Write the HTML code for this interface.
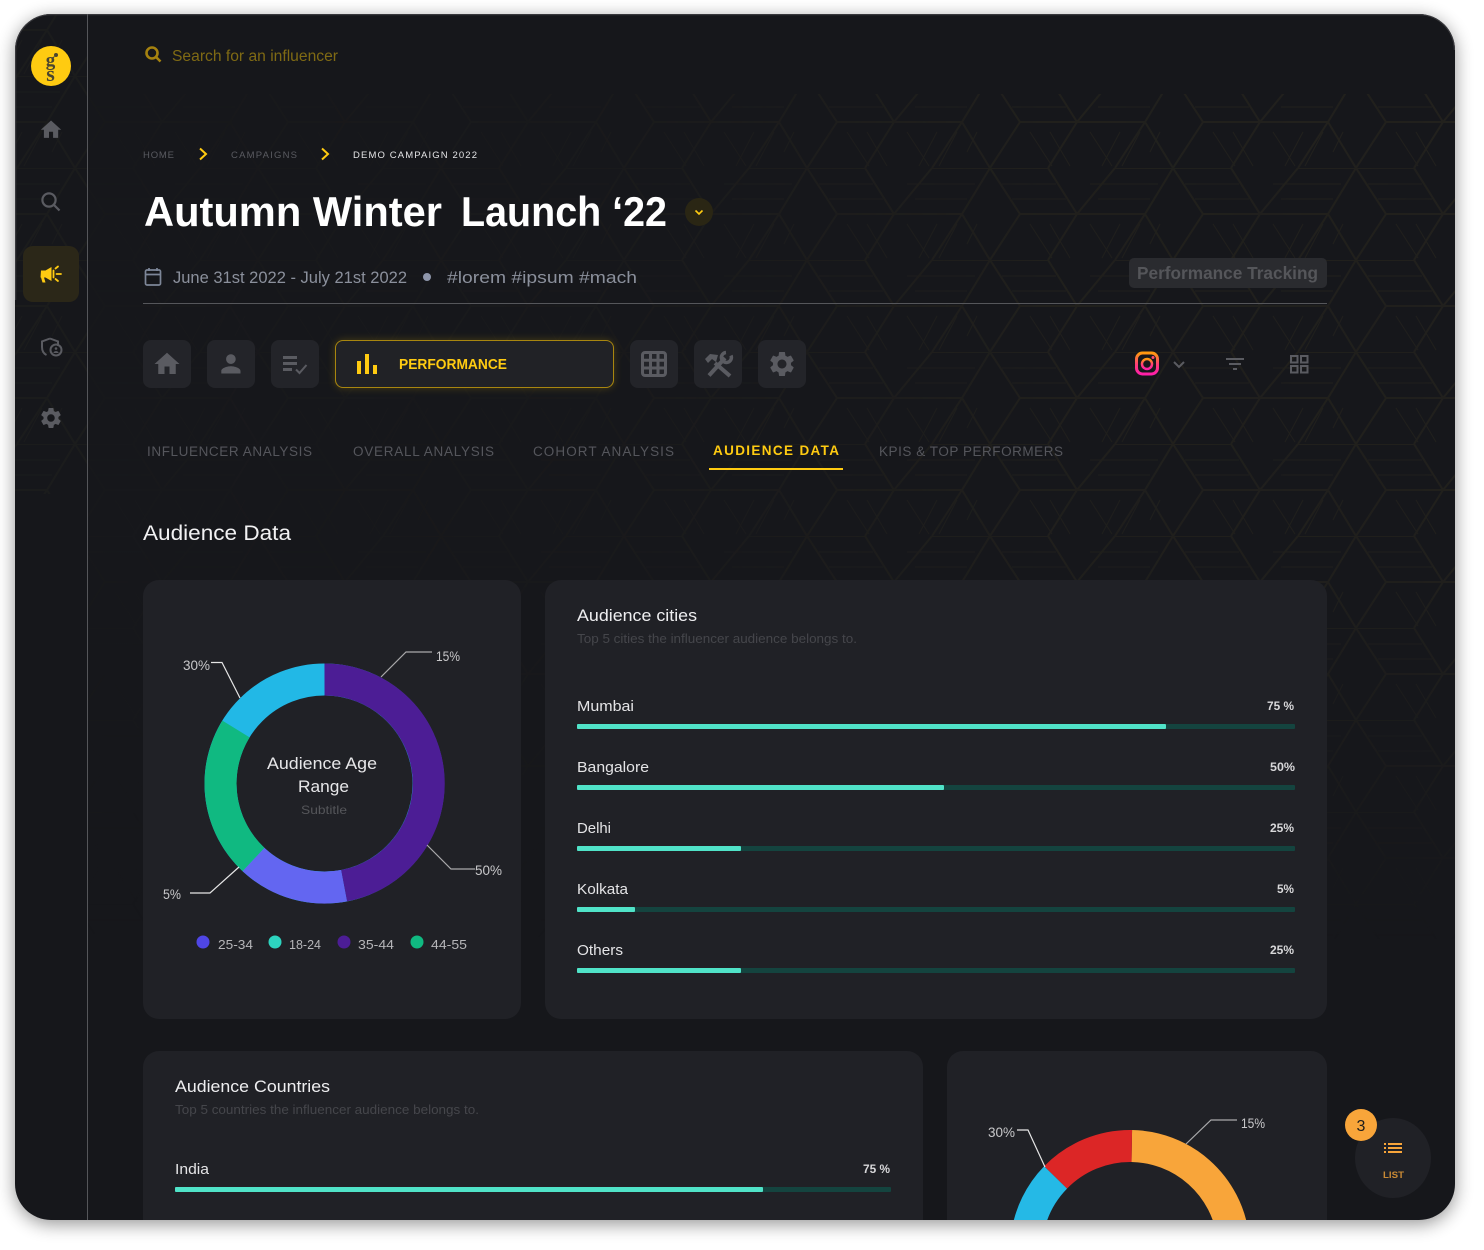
<!DOCTYPE html>
<html><head><meta charset="utf-8"><style>
html,body{margin:0;padding:0;background:#fff;width:1484px;height:1250px;overflow:hidden}
svg{display:block}
text{font-family:"Liberation Sans",sans-serif}
</style></head><body>
<svg width="1484" height="1250" viewBox="0 0 1484 1250" xmlns="http://www.w3.org/2000/svg" style="overflow:hidden">
<defs>
<filter id="sh" x="-5%" y="-5%" width="110%" height="110%"><feGaussianBlur stdDeviation="9"/></filter>
<filter id="glow" x="-10%" y="-40%" width="120%" height="180%"><feGaussianBlur stdDeviation="4"/></filter>
<clipPath id="fr"><rect x="15" y="14" width="1440" height="1206" rx="36"/></clipPath>
<pattern id="hex" patternUnits="userSpaceOnUse" width="183" height="92" x="75" y="76">
<g fill="none" stroke="#22211d">
<path stroke-width="2" d="M0 0H58L87 46H30L0 0M87 46H155L183 0H125L87 46M155 46L183 92M125 92L155 46M30 46L0 92M87 46L58 92"/>
<path stroke-width="1" d="M12 16H66M22 31H76M100 16H168M108 31H160M40 56L62 90M60 56L80 90M100 56L122 90M130 56L112 90M150 56L132 90M170 56L160 76"/>
</g>
</pattern>
<linearGradient id="fadeh" x1="0" y1="0" x2="1" y2="0"><stop offset="0" stop-color="#fff" stop-opacity=".12"/><stop offset=".4" stop-color="#fff" stop-opacity=".3"/><stop offset=".7" stop-color="#fff" stop-opacity=".9"/><stop offset="1" stop-color="#fff" stop-opacity="1"/></linearGradient>
<linearGradient id="fadev" gradientUnits="userSpaceOnUse" x1="0" y1="94" x2="0" y2="940"><stop offset="0" stop-color="#fff" stop-opacity="1"/><stop offset=".55" stop-color="#fff" stop-opacity=".9"/><stop offset="1" stop-color="#fff" stop-opacity="0"/></linearGradient>
<mask id="pm" maskUnits="userSpaceOnUse" x="0" y="0" width="1484" height="1250"><rect x="0" y="0" width="1484" height="1250" fill="url(#fadeh)"/></mask>
<mask id="pv" maskUnits="userSpaceOnUse" x="0" y="0" width="1484" height="1250"><rect x="0" y="0" width="1484" height="1250" fill="url(#fadev)"/></mask>
<linearGradient id="ig" x1="0" y1="0" x2="0" y2="1"><stop offset="0" stop-color="#ff9a0e"/><stop offset=".55" stop-color="#ff3d78"/><stop offset="1" stop-color="#ff1fa8"/></linearGradient>
<path id="home" d="M10 20v-6h4v6h5v-8h3L12 3 2 12h3v8z"/>
<path id="gear" d="M19.14 12.94c.04-.3.06-.61.06-.94 0-.32-.02-.64-.07-.94l2.03-1.58c.18-.14.23-.41.12-.61l-1.92-3.32c-.12-.22-.37-.29-.59-.22l-2.39.96c-.5-.38-1.03-.7-1.62-.94l-.36-2.54c-.04-.24-.24-.41-.48-.41h-3.84c-.24 0-.43.17-.47.41l-.36 2.54c-.59.24-1.13.57-1.62.94l-2.39-.96c-.22-.08-.47 0-.59.22L2.74 8.87c-.12.21-.08.47.12.61l2.03 1.58c-.05.3-.09.63-.09.94s.02.64.07.94l-2.03 1.58c-.18.14-.23.41-.12.61l1.92 3.32c.12.22.37.29.59.22l2.39-.96c.5.38 1.03.7 1.62.94l.36 2.54c.05.24.24.41.48.41h3.84c.24 0 .44-.17.47-.41l.36-2.54c.59-.24 1.13-.56 1.62-.94l2.39.96c.22.08.47 0 .59-.22l1.92-3.32c.12-.22.07-.47-.12-.61l-2.01-1.58zM12 15.6c-1.98 0-3.6-1.62-3.6-3.6s1.62-3.6 3.6-3.6 3.6 1.62 3.6 3.6-1.62 3.6-3.6 3.6z"/>
</defs>

<rect x="15" y="18" width="1440" height="1206" rx="36" fill="#000" opacity=".42" filter="url(#sh)"/>
<rect x="15" y="14" width="1440" height="1206" rx="36" fill="#16171b"/>

<g clip-path="url(#fr)">
<g mask="url(#pv)"><g mask="url(#pm)">
<rect x="88" y="94" width="1367" height="846" fill="url(#hex)"/>
</g></g>
<rect x="15" y="14" width="72" height="480" fill="url(#hex)" opacity=".45"/>
<path d="M15.500 300V50A35.500 35.500 0 0 1 51 14.500H1419A35.500 35.500 0 0 1 1454.500 50" fill="none" stroke="#38383c" stroke-width="1.500"/>
<rect x="87" y="14" width="1" height="1206" fill="#55565a"/>

<!-- sidebar -->
<circle cx="51" cy="66" r="20" fill="#ffcb11"/>
<g fill="#4a4530" font-weight="700" text-anchor="middle" style="font-family:'Liberation Serif',serif">
<text x="50.500" y="66" font-size="19" style="font-family:'Liberation Serif',serif">g</text>
<text x="50.500" y="81" font-size="22" style="font-family:'Liberation Serif',serif">s</text>
</g>
<circle cx="56" cy="55" r="2" fill="#4a4530"/>
<use href="#home" transform="translate(38.800 117.500) scale(1.020)" fill="#5a5b61"/>
<g fill="none" stroke="#5a5b61" stroke-width="2.200"><circle cx="49" cy="200" r="6.600"/><path d="M54 205L59.500 210.500"/></g>
<rect x="23" y="246" width="56" height="56" rx="10" fill="#2b2718"/>
<g fill="#ffcb11"><path d="M41 270.500h4.500l6-3.500v14l-6-3.500h-1.500l1.500 5h-3l-1.500-5h-.500z"/></g>
<g stroke="#ffcb11" stroke-width="1.800" fill="none" stroke-linecap="round"><path d="M53.500 270.500L53.500 277.500"/><path d="M55.500 268.500L58 266.500M56.500 274H61M55.500 279L58 281"/></g>
<g fill="none" stroke="#5a5b61" stroke-width="2"><path d="M50 338.500l8 3v4.500M46.500 355c-3-1.500-4.500-4.500-4.500-8v-5.500l8-3"/><circle cx="56" cy="350" r="5.500"/></g>
<circle cx="56" cy="348.500" r="1.300" fill="#5a5b61"/><path d="M53.500 353c0-2.500 5-2.500 5 0z" fill="#5a5b61"/>
<use href="#gear" transform="translate(38.500 405.500) scale(1.040)" fill="#5a5b61"/>

<!-- search -->
<g fill="none" stroke="#a5820f" stroke-width="2.600"><circle cx="152" cy="53" r="5.500"/><path d="M156 57L160.500 61.500"/></g>
<text x="172" y="61" font-size="15.500" fill="#7f6a14" textLength="166" lengthAdjust="spacingAndGlyphs">Search for an influencer</text>

<!-- breadcrumb -->
<text x="143" y="158" font-size="9.500" fill="#5a5b61" textLength="31" lengthAdjust="spacing">HOME</text>
<path d="M200 148.500L206 154L200 159.500" fill="none" stroke="#ffcb11" stroke-width="2"/>
<text x="231" y="158" font-size="9.500" fill="#5a5b61" textLength="66" lengthAdjust="spacing">CAMPAIGNS</text>
<path d="M322 148.500L328 154L322 159.500" fill="none" stroke="#ffcb11" stroke-width="2"/>
<text x="353" y="158" font-size="9.500" fill="#e4e4e6" textLength="124" lengthAdjust="spacing">DEMO CAMPAIGN 2022</text>

<!-- title -->
<text x="144" y="226" font-size="42" font-weight="700" fill="#fff" textLength="298" lengthAdjust="spacingAndGlyphs">Autumn Winter</text>
<text x="461" y="226" font-size="42" font-weight="700" fill="#fff" textLength="206" lengthAdjust="spacingAndGlyphs">Launch ‘22</text>
<circle cx="699" cy="212" r="14" fill="#2a2614"/>
<path d="M695.500 210.500L699 214L702.500 210.500" fill="none" stroke="#ffcb11" stroke-width="1.600"/>

<!-- date row -->
<g fill="none" stroke="#7d8698" stroke-width="1.700"><rect x="145.500" y="270" width="15" height="15" rx="1.500"/><path d="M145.500 274.500H160.500M149 268V271M157 268V271"/></g>
<text x="173" y="283" font-size="17" fill="#8b909c" textLength="234" lengthAdjust="spacingAndGlyphs">June 31st 2022 - July 21st 2022</text>
<circle cx="427" cy="277" r="4" fill="#8e96ab"/>
<text x="447" y="283" font-size="17" fill="#8b909c" textLength="190" lengthAdjust="spacingAndGlyphs">#lorem #ipsum #mach</text>
<rect x="1129" y="258" width="198" height="30" rx="5" fill="#2a2b2f"/>
<text x="1137" y="279" font-size="17.500" font-weight="700" fill="#55565a" textLength="181" lengthAdjust="spacingAndGlyphs">Performance Tracking</text>
<rect x="143" y="303" width="1184" height="1" fill="#55565a"/>

<!-- toolbar -->
<g fill="#232429">
<rect x="143" y="340" width="48" height="48" rx="8"/><rect x="207" y="340" width="48" height="48" rx="8"/><rect x="271" y="340" width="48" height="48" rx="8"/>
<rect x="630" y="340" width="48" height="48" rx="8"/><rect x="694" y="340" width="48" height="48" rx="8"/><rect x="758" y="340" width="48" height="48" rx="8"/>
</g>
<rect x="335" y="340" width="279" height="48" rx="8" fill="#ffcb11" opacity=".22" filter="url(#glow)"/>
<rect x="335.500" y="340.500" width="278" height="47" rx="7.500" fill="#212226" stroke="#a8860f"/>
<use href="#home" transform="translate(152 349) scale(1.250)" fill="#5a5b61"/>
<path transform="translate(216.500 349.500) scale(1.200)" fill="#5a5b61" d="M12 12c2.210 0 4-1.790 4-4s-1.790-4-4-4-4 1.790-4 4 1.790 4 4 4zm0 2c-2.670 0-8 1.340-8 4v2h16v-2c0-2.660-5.330-4-8-4z"/>
<g fill="#5a5b61"><rect x="283" y="356" width="14" height="3"/><rect x="283" y="362" width="14" height="3"/><rect x="283" y="368" width="9" height="3"/></g>
<path d="M296 369.500L299.500 373L306.500 365" fill="none" stroke="#5a5b61" stroke-width="2"/>
<g fill="#ffcb11"><rect x="357" y="361" width="4" height="13"/><rect x="365" y="354" width="4" height="20"/><rect x="373" y="365" width="4" height="9"/></g>
<text x="399" y="369" font-size="14.500" font-weight="700" fill="#ffcb11" textLength="108" lengthAdjust="spacingAndGlyphs">PERFORMANCE</text>
<g fill="none" stroke="#5a5b61" stroke-width="3"><rect x="642.500" y="352.500" width="23" height="23" rx="2.500"/><path d="M650.500 352V376M658 352V376M642 360.300H666M642 368H666"/></g>
<g stroke="#5a5b61" fill="none" stroke-width="4">
<path d="M709 375.500L725 358"/>
<path d="M715 363L730 376"/>
</g>
<path d="M705 359L710 354L718 355L716 362L712 359L708 363Z" fill="#5a5b61"/>
<path d="M731 355.500a5 5 0 1 1-5-3" fill="none" stroke="#5a5b61" stroke-width="3.500"/>

<use href="#gear" transform="translate(767 349) scale(1.250)" fill="#5a5b61"/>

<!-- right tools -->
<rect x="1136.500" y="353" width="21" height="21" rx="6" fill="none" stroke="url(#ig)" stroke-width="3"/>
<circle cx="1147" cy="364" r="5" fill="none" stroke="url(#ig)" stroke-width="2.500"/>
<circle cx="1153" cy="357.500" r="1.500" fill="#ff4a70"/>
<path d="M1174 362L1179 367L1184 362" fill="none" stroke="#5a5b61" stroke-width="2"/>
<g fill="#5a5b61"><rect x="1226" y="358" width="18" height="2"/><rect x="1229" y="363" width="12" height="2"/><rect x="1233" y="368" width="4" height="2"/></g>
<g fill="none" stroke="#5a5b61" stroke-width="2"><rect x="1291" y="356" width="6.500" height="6.500"/><rect x="1301" y="356" width="6.500" height="6.500"/><rect x="1291" y="366" width="6.500" height="6.500"/><rect x="1301" y="366" width="6.500" height="6.500"/></g>

<!-- tabs -->
<g font-size="13.500" fill="#55565c">
<text x="147" y="456" textLength="165" lengthAdjust="spacing">INFLUENCER ANALYSIS</text>
<text x="353" y="456" textLength="141" lengthAdjust="spacing">OVERALL ANALYSIS</text>
<text x="533" y="456" textLength="141" lengthAdjust="spacing">COHORT ANALYSIS</text>
<text x="879" y="456" textLength="184" lengthAdjust="spacing">KPIS &amp; TOP PERFORMERS</text>
</g>
<text x="713" y="455" font-size="13.500" font-weight="700" fill="#ffcb11" textLength="126" lengthAdjust="spacing">AUDIENCE DATA</text>
<rect x="709" y="468" width="134" height="2" fill="#ffcb11"/>

<text x="143" y="540" font-size="21.500" fill="#f2f2f3" textLength="148" lengthAdjust="spacingAndGlyphs">Audience Data</text>

<!-- cards -->
<g fill="#202126">
<rect x="143" y="580" width="378" height="439" rx="16"/>
<rect x="545" y="580" width="782" height="439" rx="16"/>
<rect x="143" y="1051" width="780" height="190" rx="16"/>
<rect x="947" y="1051" width="380" height="190" rx="16"/>
</g>

<!-- donut 1 -->
<g fill="none" stroke-width="32">
<circle cx="324.500" cy="783.500" r="104" stroke="#22b8e6"/>
<path stroke="#4c1d95" d="M324.500 679.500A104 104 0 0 1 344 885.700"/>
<path stroke="#6366f1" d="M344 885.700A104 104 0 0 1 253.500 859.500"/>
<path stroke="#10b981" d="M253.500 859.500A104 104 0 0 1 236 729"/>
</g>
<g fill="none" stroke="#a9a9ab" stroke-width="1.200">
<path d="M381 677L406 652H432"/><path d="M427 845L451 869H475"/>
</g>
<g fill="none" stroke="#e6e6e6" stroke-width="1.200">
<path d="M211 662.500H222L240 698"/><path d="M190 893H210L239 867"/>
</g>
<g font-size="14" fill="#c8c8ca">
<text x="183" y="670" textLength="27" lengthAdjust="spacingAndGlyphs">30%</text>
<text x="436" y="661" textLength="24" lengthAdjust="spacingAndGlyphs">15%</text>
<text x="475" y="875" textLength="27" lengthAdjust="spacingAndGlyphs">50%</text>
<text x="163" y="899" textLength="18" lengthAdjust="spacingAndGlyphs">5%</text>
</g>
<text x="267" y="769" font-size="16.500" fill="#e6e6e8" textLength="110" lengthAdjust="spacingAndGlyphs">Audience Age</text>
<text x="298" y="792" font-size="16.500" fill="#e6e6e8" textLength="51" lengthAdjust="spacingAndGlyphs">Range</text>
<text x="301" y="814" font-size="12" fill="#55565a" textLength="46" lengthAdjust="spacingAndGlyphs">Subtitle</text>
<circle cx="203" cy="942" r="6.500" fill="#4f46e5"/><circle cx="275" cy="942" r="6.500" fill="#2dd4bf"/><circle cx="344" cy="942" r="6.500" fill="#4c1d95"/><circle cx="417" cy="942" r="6.500" fill="#10b981"/>
<g font-size="12.500" fill="#b5b5b8">
<text x="218" y="949" textLength="35" lengthAdjust="spacingAndGlyphs">25-34</text>
<text x="289" y="949" textLength="32" lengthAdjust="spacingAndGlyphs">18-24</text>
<text x="358" y="949" textLength="36" lengthAdjust="spacingAndGlyphs">35-44</text>
<text x="431" y="949" textLength="36" lengthAdjust="spacingAndGlyphs">44-55</text>
</g>

<!-- cities -->
<text x="577" y="621" font-size="17" fill="#eeeef0" textLength="120" lengthAdjust="spacingAndGlyphs">Audience cities</text>
<text x="577" y="643" font-size="12.500" fill="#45464b" textLength="280" lengthAdjust="spacingAndGlyphs">Top 5 cities the influencer audience belongs to.</text>
<g font-size="15" fill="#e4e4e6">
<text x="577" y="711" textLength="57" lengthAdjust="spacingAndGlyphs">Mumbai</text>
<text x="577" y="772" textLength="72" lengthAdjust="spacingAndGlyphs">Bangalore</text>
<text x="577" y="833" textLength="34" lengthAdjust="spacingAndGlyphs">Delhi</text>
<text x="577" y="894" textLength="51" lengthAdjust="spacingAndGlyphs">Kolkata</text>
<text x="577" y="955" textLength="46" lengthAdjust="spacingAndGlyphs">Others</text>
</g>
<g font-size="12" font-weight="700" fill="#d8d8da">
<text x="1267" y="710" textLength="27" lengthAdjust="spacingAndGlyphs">75 %</text>
<text x="1270" y="771" textLength="25" lengthAdjust="spacingAndGlyphs">50%</text>
<text x="1270" y="832" textLength="24" lengthAdjust="spacingAndGlyphs">25%</text>
<text x="1277" y="893" textLength="17" lengthAdjust="spacingAndGlyphs">5%</text>
<text x="1270" y="954" textLength="24" lengthAdjust="spacingAndGlyphs">25%</text>
</g>
<g fill="#14443f">
<rect x="577" y="724" width="718" height="5" rx="1"/><rect x="577" y="785" width="718" height="5" rx="1"/><rect x="577" y="846" width="718" height="5" rx="1"/><rect x="577" y="907" width="718" height="5" rx="1"/><rect x="577" y="968" width="718" height="5" rx="1"/>
</g>
<g fill="#50e3c8">
<rect x="577" y="724" width="589" height="5" rx="1"/><rect x="577" y="785" width="367" height="5" rx="1"/><rect x="577" y="846" width="164" height="5" rx="1"/><rect x="577" y="907" width="58" height="5" rx="1"/><rect x="577" y="968" width="164" height="5" rx="1"/>
</g>

<!-- countries -->
<text x="175" y="1092" font-size="17" fill="#eeeef0" textLength="155" lengthAdjust="spacingAndGlyphs">Audience Countries</text>
<text x="175" y="1114" font-size="12.500" fill="#45464b" textLength="304" lengthAdjust="spacingAndGlyphs">Top 5 countries the influencer audience belongs to.</text>
<text x="175" y="1174" font-size="15" fill="#e4e4e6" textLength="34" lengthAdjust="spacingAndGlyphs">India</text>
<text x="863" y="1173" font-size="12" font-weight="700" fill="#d8d8da" textLength="27" lengthAdjust="spacingAndGlyphs">75 %</text>
<rect x="175" y="1187" width="716" height="5" rx="1" fill="#14443f"/><rect x="175" y="1187" width="588" height="5" rx="1" fill="#50e3c8"/>

<!-- donut 2 -->
<g fill="none" stroke-width="32">
<path stroke="#f8a53a" d="M1131.800 1146A104 104 0 0 1 1233 1236"/>
<path stroke="#dc2626" d="M1131.800 1146A104 104 0 0 0 1055.600 1177.400"/>
<path stroke="#25b9e6" d="M1055.600 1177.400A104 104 0 0 0 1027 1236"/>
</g>
<path d="M1186 1144L1211 1120H1237" fill="none" stroke="#a9a9ab" stroke-width="1.200"/>
<path d="M1017 1130H1028L1045 1167" fill="none" stroke="#e6e6e6" stroke-width="1.200"/>
<g font-size="14" fill="#c8c8ca">
<text x="988" y="1137" textLength="27" lengthAdjust="spacingAndGlyphs">30%</text>
<text x="1241" y="1128" textLength="24" lengthAdjust="spacingAndGlyphs">15%</text>
</g>

<!-- fab -->
<ellipse cx="1393" cy="1158" rx="38" ry="40" fill="#202126"/>
<circle cx="1361" cy="1125" r="16" fill="#f8a53a"/>
<text x="1361" y="1131" text-anchor="middle" font-size="16" fill="#1c1c1c">3</text>
<g fill="#f8a53a"><rect x="1384" y="1143" width="2" height="2"/><rect x="1388" y="1143" width="14" height="2"/><rect x="1384" y="1147" width="2" height="2"/><rect x="1388" y="1147" width="14" height="2"/><rect x="1384" y="1151" width="2" height="2"/><rect x="1388" y="1151" width="14" height="2"/></g>
<text x="1383" y="1178" font-size="9.500" font-weight="700" fill="#c98a35" textLength="21" lengthAdjust="spacingAndGlyphs">LIST</text>
</g>
</svg>
</body></html>
